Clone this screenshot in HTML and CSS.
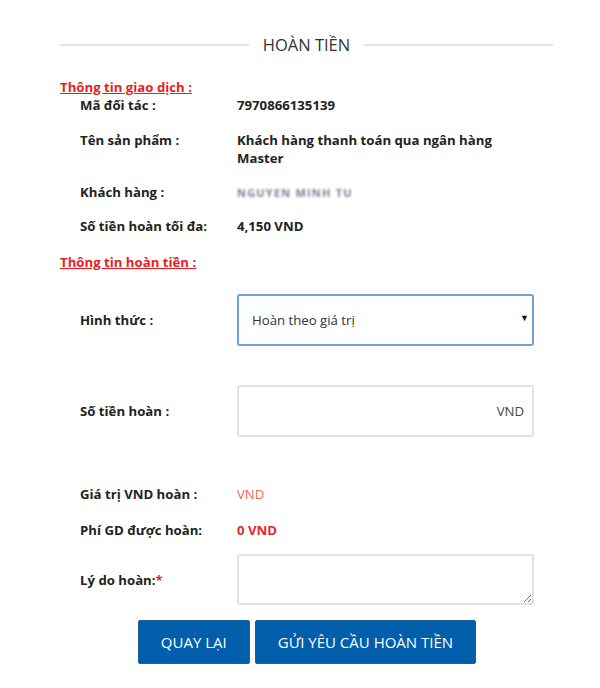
FILE: index.html
```html
<!DOCTYPE html>
<html lang="vi">
<head>
  <meta charset="UTF-8">
  <meta name="viewport" content="width=device-width, initial-scale=1.0">
  <title>Hoàn tiền</title>
  <link rel="stylesheet" href="styles.css">
</head>
<body>
  <div class="container">
    <div class="title">
      <span>HOÀN TIỀN</span>
    </div>

    <h3 class="section-title">Thông tin giao dịch :</h3>
    <div class="info-row first">
      <div class="label">Mã đối tác :</div>
      <div class="value">7970866135139</div>
    </div>
    <div class="info-row">
      <div class="label">Tên sản phẩm :</div>
      <div class="value">Khách hàng thanh toán qua ngân hàng Master</div>
    </div>
    <div class="info-row customer">
      <div class="label">Khách hàng :</div>
      <div class="value"><span class="masked">NGUYEN MINH TU</span></div>
    </div>
    <div class="info-row max-amount">
      <div class="label">Số tiền hoàn tối đa:</div>
      <div class="value">4,150 VND</div>
    </div>

    <h3 class="section-title second">Thông tin hoàn tiền :</h3>
    <form id="refund-form">
      <div class="form-row method">
        <label class="label" for="method">Hình thức :</label>
        <div class="select-wrap">
          <select id="method">
            <option>Hoàn theo giá trị</option>
            <option>Hoàn toàn bộ</option>
          </select>
        </div>
      </div>

      <div class="form-row amount">
        <label class="label" for="amount">Số tiền hoàn :</label>
        <div class="input-group">
          <input type="text" id="amount">
          <span class="unit">VND</span>
        </div>
      </div>

      <div class="form-row text-row vnd">
        <div class="label">Giá trị VND hoàn :</div>
        <div class="value light-red">VND</div>
      </div>

      <div class="form-row text-row fee">
        <div class="label">Phí GD được hoàn:</div>
        <div class="value red">0 VND</div>
      </div>

      <div class="form-row reason">
        <label class="label" for="reason">Lý do hoàn:<span class="required">*</span></label>
        <textarea id="reason"></textarea>
      </div>

      <div class="actions">
        <a href="#" class="button">QUAY LẠI</a>
        <button type="submit" class="button">GỬI YÊU CẦU HOÀN TIỀN</button>
      </div>
    </form>
  </div>
</body>
</html>
```

FILE: styles.css
```css
* {
  box-sizing: border-box;
  margin: 0;
  padding: 0;
  font-family: 'Open Sans', 'Liberation Sans', sans-serif;
}

body {
  background-color: white;
  color: #222;
  font-size: 13.2px;
  line-height: 18px;
}

.container {
  width: 493px;
  margin-left: 60px;
  padding-top: 35px;
}

.title {
  display: flex;
  align-items: center;
  color: #333;
  font-size: 16.5px;
  line-height: 20px;
}

.title::before,
.title::after {
  content: "";
  flex: 1;
  border-bottom: 2px solid #e2e2e2;
}

.title span {
  padding: 0 14px;
}

.section-title {
  margin-top: 23px;
  color: #ec1c24;
  font-size: 13.2px;
  font-weight: bold;
  text-decoration: underline;
}

.section-title.second {
  margin-top: 18px;
}

.info-row,
.form-row {
  display: grid;
  grid-template-columns: 157px 297px;
  padding-left: 20px;
  margin-top: 17px;
}

.info-row.first {
  margin-top: 0;
}

.info-row.customer {
  margin-top: 16px;
}

.info-row.max-amount {
  margin-top: 15px;
}

.label {
  font-weight: bold;
  color: #222;
}

.value {
  font-weight: bold;
}

.masked {
  display: inline-block;
  font-size: 11px;
  color: #7a8090;
  letter-spacing: 1.2px;
  filter: blur(1px);
}

.form-row {
  align-items: center;
}

.form-row.method {
  margin-top: 23px;
}

.form-row.amount {
  margin-top: 39px;
}

.form-row.vnd {
  margin-top: 48px;
}

.form-row.fee {
  margin-top: 18px;
}

.form-row.reason {
  margin-top: 15px;
}

.select-wrap {
  position: relative;
}

.select-wrap::after {
  content: "▼";
  position: absolute;
  right: 5px;
  top: 19px;
  font-size: 9px;
  line-height: 10px;
  color: #111;
  pointer-events: none;
}

select {
  width: 100%;
  height: 52px;
  padding: 0 13px;
  border: 2px solid #6da2e0;
  border-radius: 3px;
  background: white;
  color: #333;
  font-size: 13.2px;
  appearance: none;
  -webkit-appearance: none;
}

.input-group {
  display: flex;
  align-items: center;
  height: 52px;
  border: 2px solid #e2e2e2;
  border-radius: 3px;
}

.input-group input {
  flex: 1;
  min-width: 0;
  height: 100%;
  border: none;
  padding: 0 12px;
  font-size: 13px;
}

.input-group input:focus {
  outline: none;
}

.unit {
  padding-right: 8px;
  color: #444;
}

.light-red {
  font-weight: normal;
  color: #f06b55;
}

.red {
  color: #e8262c;
}

.required {
  color: #e8262c;
}

textarea {
  display: block;
  width: 100%;
  height: 51px;
  border: 2px solid #e2e2e2;
  border-radius: 3px;
  padding: 6px 10px;
  font-size: 13px;
}

.actions {
  display: flex;
  justify-content: center;
  gap: 5px;
  margin-top: 15px;
  padding-left: 1px;
}

.button {
  display: inline-block;
  height: 44px;
  padding: 0 22px;
  background-color: #005eab;
  color: white;
  border: 1px solid #1a5f9e;
  border-radius: 2px;
  font-size: 15px;
  line-height: 42px;
  text-decoration: none;
  cursor: pointer;
}

.button:hover {
  background-color: #004f90;
}
```
